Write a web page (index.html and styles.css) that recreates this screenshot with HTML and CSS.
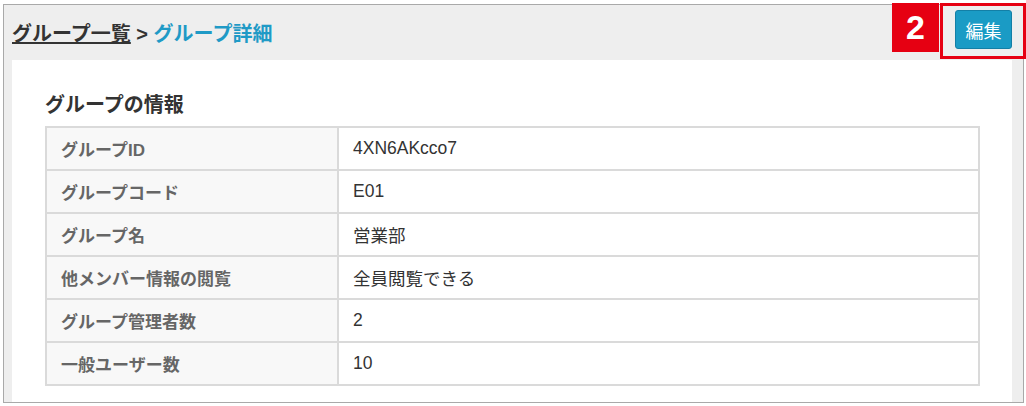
FILE: index.html
```html
<!DOCTYPE html>
<html>
<head>
	<meta charset="utf-8">
	<title>グループ詳細</title>
	<link rel="stylesheet" href="styles.css">
</head>
<body>
<div class="frame">
	<div class="head">
		<div class="crumb"><a href="#">グループ一覧</a> &gt; <span class="cur">グループ詳細</span></div>
		<button class="btn-edit">編集</button>
	</div>
	<div class="panel">
		<h2 class="title">グループの情報</h2>
		<table class="info">
			<tr><th>グループID</th><td>4XN6AKcco7</td></tr>
			<tr><th>グループコード</th><td>E01</td></tr>
			<tr><th>グループ名</th><td>営業部</td></tr>
			<tr><th>他メンバー情報の閲覧</th><td>全員閲覧できる</td></tr>
			<tr><th>グループ管理者数</th><td>2</td></tr>
			<tr><th>一般ユーザー数</th><td>10</td></tr>
		</table>
	</div>
	<!-- 注釈 -->
	<div class="note-num">2</div>
	<div class="note-box"></div>
</div>
</body>
</html>
```

FILE: styles.css
```css
html,body{margin:0;padding:0;background:#fff;}
body{font-family:"Liberation Sans","Noto Sans CJK JP",sans-serif;color:#333;}
.frame{position:relative;margin:4px 0 0 3px;width:1021px;height:399px;border:1px solid #a9a9a9;background:#eee;box-sizing:border-box;display:flex;flex-direction:column;}
.head{height:55px;display:flex;align-items:center;justify-content:space-between;padding:0 11px 0 8px;}
.crumb{font-size:20px;font-weight:bold;color:#333;margin-top:-1px;}
.crumb a{color:#333;text-decoration:underline;}
.crumb .cur{color:#1f9ac6;}
.btn-edit{width:57px;height:39px;margin-top:-6px;background:#1a9bc5;border:1px solid #137fa6;border-radius:3px;color:#fff;font-size:18px;font-family:inherit;padding:0;}
.panel{flex:1;background:#fff;margin:0 11px 0 8px;padding:33px 32px 0 33px;}
.title{margin:0 0 8px;font-size:20px;font-weight:bold;color:#333;line-height:25px;}
.info{width:100%;border-collapse:collapse;font-size:17px;}
.info th,.info td{border:2px solid #dadada;height:41px;padding:0 14px;text-align:left;}
.info th{width:262px;background:#f8f8f8;color:#666;font-weight:bold;}
.info td{color:#333;font-size:17.5px;}
.note-num{position:absolute;left:888px;top:-2px;width:47px;height:49px;background:#e60012;color:#fff;font-size:34px;font-weight:bold;display:flex;align-items:center;justify-content:center;}
.note-box{position:absolute;left:936px;top:-2px;width:86px;height:56px;border:3px solid #e60012;box-sizing:border-box;}
```
